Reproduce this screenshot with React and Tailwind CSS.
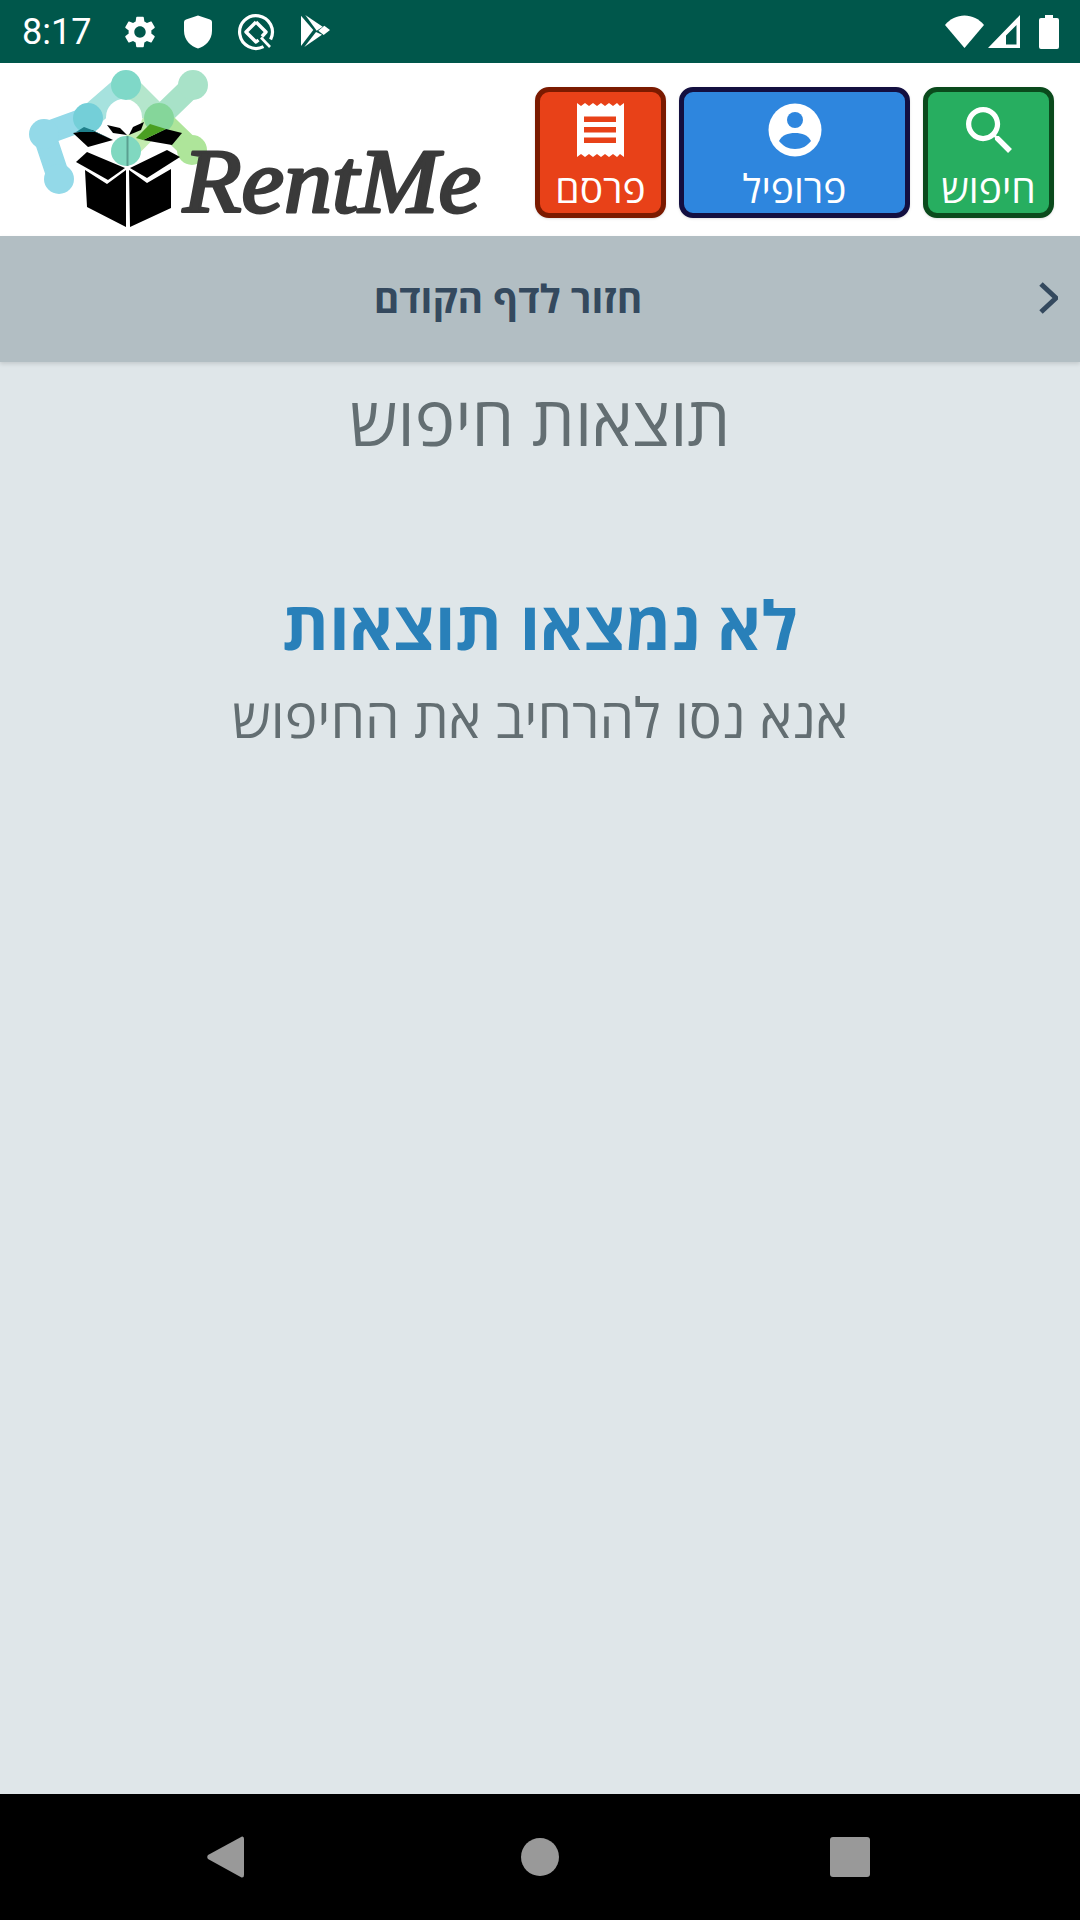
const F = '"Open Sans","Noto Sans","DejaVu Sans",sans-serif';

function Gear() {
  return (
    <svg viewBox="0 0 24 24" className="w-[38px] h-[38px]" fill="#fff">
      <path d="M19.14 12.94c.04-.3.06-.61.06-.94 0-.32-.02-.64-.07-.94l2.03-1.58c.18-.14.23-.41.12-.61l-1.92-3.32c-.12-.22-.37-.29-.59-.22l-2.39.96c-.5-.38-1.03-.7-1.62-.94l-.36-2.54c-.04-.24-.24-.41-.48-.41h-3.84c-.24 0-.43.17-.47.41l-.36 2.54c-.59.24-1.13.57-1.62.94l-2.39-.96c-.22-.08-.47 0-.59.22L2.74 8.87c-.12.21-.08.47.12.61l2.03 1.58c-.05.3-.09.63-.09.94s.02.64.07.94l-2.03 1.58c-.18.14-.23.41-.12.61l1.92 3.32c.12.22.37.29.59.22l2.39-.96c.5.38 1.03.7 1.62.94l.36 2.54c.05.24.24.41.48.41h3.84c.24 0 .44-.17.47-.41l.36-2.54c.59-.24 1.13-.56 1.62-.94l2.39.96c.22.08.47 0 .59-.22l1.92-3.32c.12-.22.07-.47-.12-.61l-2.01-1.58zM12 15.6c-1.98 0-3.6-1.62-3.6-3.6s1.62-3.6 3.6-3.6 3.6 1.62 3.6 3.6-1.62 3.6-3.6 3.6z" />
    </svg>
  );
}
function Shield() {
  return (
    <svg viewBox="0 0 28 34" className="w-[28px] h-[34px]" fill="#fff">
      <path d="M14 0.5 L26 4.5 Q28 5.2 28 7 V16 C28 25 21 31.5 14 33.5 C7 31.5 0 25 0 16 V7 Q0 5.2 2 4.5 Z" />
    </svg>
  );
}
function QIcon() {
  return (
    <svg viewBox="0 0 38 38" className="w-[38px] h-[38px]" fill="none" stroke="#fff" strokeWidth="3.2">
      <path d="M26.5 33.6 A16.4 16.4 0 1 1 33.6 26.5" />
      <path d="M19 9 L29 19 L25 23.5 M21.5 27 L19 29 L9 19 L19 9" strokeWidth="3.4" strokeLinejoin="round" />
      <path d="M24 24.5 L33 34" strokeWidth="2.6" />
    </svg>
  );
}
function Play() {
  return (
    <svg viewBox="0 0 30 36" className="w-[30px] h-[36px]" fill="#fff">
      <path d="M1 1.7 L13.3 16 L1 32 Z" />
      <path d="M5.3 1 L22.7 12.7 L16.7 16.7 Z" />
      <path d="M30 16 L24.3 11.7 L18.3 16.7 L23.7 21 Z" />
      <path d="M4.3 33 L22 20.7 L16 18 Z" />
    </svg>
  );
}
function Wifi() {
  return (
    <svg viewBox="0 0 39 33" className="w-[39px] h-[33px]" fill="#fff">
      <path d="M19.5 33 L0 10 C5 4 12 0.5 19.5 0.5 C27 0.5 34 4 39 10 Z" />
    </svg>
  );
}
function Signal() {
  return (
    <svg viewBox="0 0 32 33" className="w-[32px] h-[33px]" fill="#fff">
      <path fillRule="evenodd" d="M32 0 V33 H0 Z M28.5 10 L18 20.5 V29.5 H28.5 Z" />
    </svg>
  );
}
function Battery() {
  return (
    <svg viewBox="0 0 20 34" className="w-[20px] h-[34px]" fill="#fff">
      <path d="M6 0 H14 V3 H18 Q20 3 20 5 V32 Q20 34 18 34 H2 Q0 34 0 32 V5 Q0 3 2 3 H6 Z" />
    </svg>
  );
}
function Search() {
  return (
    <svg viewBox="3 3 17.5 17.5" className="w-[46px] h-[46px]" fill="#fff">
      <path d="M15.5 14h-.79l-.28-.27C15.41 12.59 16 11.11 16 9.5 16 5.91 13.09 3 9.5 3S3 5.91 3 9.5 5.91 16 9.5 16c1.61 0 3.09-.59 4.23-1.57l.27.28v.79l5 4.99L20.49 19l-4.99-5zm-6 0C7.01 14 5 11.99 5 9.5S7.01 5 9.5 5 14 7.01 14 9.5 11.99 14 9.5 14z" />
    </svg>
  );
}
function Profile() {
  return (
    <svg viewBox="0 0 54 54" className="w-[54px] h-[54px]">
      <circle cx="27" cy="27" r="26.5" fill="#fff" />
      <circle cx="27" cy="17" r="8" fill="#2e86de" />
      <path d="M11 38 C14 32 20 30 27 30 C34 30 40 32 43 38 C39 43 34 46 27 46 C20 46 15 43 11 38 Z" fill="#2e86de" />
    </svg>
  );
}
function Receipt() {
  return (
    <svg viewBox="0 0 47 54" className="w-[47px] h-[54px]">
      <path
        fill="#fff"
        d="M0 0 L4 3 L8 0 L12 3 L16 0 L20 3 L24 0 L28 3 L32 0 L36 3 L40 0 L43 3 L47 0 V54 L43 51 L40 54 L36 51 L32 54 L28 51 L24 54 L20 51 L16 54 L12 51 L8 54 L4 51 L0 54 Z"
      />
      <path fill="#e84118" d="M7 13.5 H39 V19 H7 Z M7 24 H39 V29.5 H7 Z M7 34.5 H39 V40 H7 Z" />
    </svg>
  );
}
function Logo() {
  return (
    <svg viewBox="0 0 500 173" className="w-[500px] h-[173px]">
      <g transform="translate(0,-63)">
        <g fill="none" strokeLinecap="round">
          <path d="M44 134 L88 118" stroke="#93d9e8" strokeWidth="23" />
          <path d="M44 134 L59 179" stroke="#93d9e8" strokeWidth="23" />
          <path d="M88 118 L126 85" stroke="#a6e2de" strokeWidth="24" />
          <path d="M126 85 L159 118" stroke="#b4e6cc" strokeWidth="24" />
          <path d="M159 118 L193 85" stroke="#a8e2c8" strokeWidth="22" />
          <path d="M159 118 L192 150" stroke="#aee59a" strokeWidth="22" />
          <path d="M126 151 L159 118" stroke="#c4ecb0" strokeWidth="22" />
        </g>
        <circle cx="124" cy="117" r="18" fill="#fff" />
        <circle cx="44" cy="134" r="15" fill="#93d9e8" />
        <circle cx="59" cy="179" r="15" fill="#93d9e8" />
        <circle cx="88" cy="118" r="15" fill="#74cfd8" />
        <circle cx="126" cy="85" r="15" fill="#7fd8c8" />
        <circle cx="193" cy="85" r="15" fill="#a8e2c8" />
        <circle cx="159" cy="118" r="15" fill="#85d69a" />
        <circle cx="192" cy="150" r="15" fill="#aee59a" />
        <g fill="#000">
          <path d="M85 170 L107 184 L126 170 V227 L87 207 Z" />
          <path d="M129 170 L147 183 L171 169 L171 208 L130 227 Z" />
          <path d="M76 162 L87 152 L125 168 L108 180 Z" />
          <path d="M130 168 L167 150 L180 157 L147 178 Z" />
          <path d="M73 133 L92 130 L113 140 L88 147 Z" />
          <path d="M143 140 L166 129 L182 133 L172 145 Z" />
          <path d="M107 125 L120 128 L127 135 L113 133 Z" />
          <path d="M144 122 L141 130 L129 135 L133 127 Z" />
        </g>
        <path d="M113 140 L92 130 L84 127 L76 132 L95 132 Z" fill="#1f7f8a" />
        <path d="M143 140 L166 129 L150 124 L136 138 Z" fill="#4a9f22" />
        <circle cx="126" cy="151" r="15" fill="#80d8c0" />
        <rect x="126.5" y="136" width="2" height="30" fill="#5a9f90" />
        <text x="183" y="212" fill="#3a3a3a" stroke="#3a3a3a" strokeWidth="3" strokeLinejoin="round" fontFamily='"Liberation Serif",serif' fontStyle="italic" fontSize="92" textLength="298" lengthAdjust="spacingAndGlyphs">RentMe</text>
      </g>
    </svg>
  );
}

function NavButton({ bg, border, width, icon, label }) {
  return (
    <div className={`flex flex-col items-center rounded-[14px] border-[5px] shadow-sm ${bg} ${border} ${width}`}>
      <div className="h-[76px] flex items-center justify-center">{icon}</div>
      <span className="text-[39px] leading-[40px] text-white">{label}</span>
    </div>
  );
}

export default function App() {
  return (
    <div className="w-[1080px] h-[1920px] flex flex-col bg-[#dfe6e9] overflow-hidden" style={{ fontFamily: F }}>
      <div className="h-[63px] bg-[#00574b] flex items-center justify-between pl-[22px] pr-[21px] shrink-0">
        <div className="flex items-center">
          <span className="text-[36px] text-white leading-none w-[99px]" style={{ fontFamily: 'Roboto,sans-serif' }}>8:17</span>
          <div className="flex items-center gap-[25px]">
            <Gear />
            <Shield />
            <QIcon />
            <Play />
          </div>
        </div>
        <div className="flex items-center">
          <Wifi />
          <div className="ml-[4px]"><Signal /></div>
          <div className="ml-[19px]"><Battery /></div>
        </div>
      </div>

      <div dir="rtl" className="h-[173px] bg-white flex items-center shrink-0 pr-[26px] relative">
        <div className="flex gap-[13px] h-[131px] mt-[6px]">
          <NavButton bg="bg-[#27ae60]" border="border-[#0a4a1c]" width="w-[131px]" icon={<Search />} label="חיפוש" />
          <NavButton bg="bg-[#2e86de]" border="border-[#130f40]" width="w-[231px]" icon={<Profile />} label="פרופיל" />
          <NavButton bg="bg-[#e84118]" border="border-[#7b1a00]" width="w-[131px]" icon={<Receipt />} label="פרסם" />
        </div>
        <div className="absolute left-0 top-0" dir="ltr"><Logo /></div>
      </div>

      <div className="h-[126px] bg-[#b2bec3] shadow-[0_2px_4px_rgba(0,0,0,0.12)] flex items-center relative shrink-0">
        <div dir="rtl" className="w-[1036px] pr-[20px] text-center text-[39px] font-bold text-[#34495e] -mt-[1px]">חזור לדף הקודם</div>
        <svg viewBox="0 0 20 32" className="w-[20px] h-[32px] ml-[2px] -mt-[2px]" fill="none" stroke="#34495e" strokeWidth="5">
          <path d="M3 2 L18 16 L3 30" />
        </svg>
      </div>

      <div dir="rtl" className="flex-1 flex flex-col items-center text-center">
        <h1 className="text-[68px] leading-[80px] text-[#636e72] mt-[18px]">תוצאות חיפוש</h1>
        <h2 className="text-[67px] leading-[90px] font-bold text-[#2980b9] mt-[119px]">לא נמצאו תוצאות</h2>
        <p className="text-[55px] leading-[70px] text-[#636e72] mt-[13px]">אנא נסו להרחיב את החיפוש</p>
      </div>

      <div className="h-[126px] bg-black flex items-center justify-between shrink-0 pl-[207px] pr-[210px]">
        <svg viewBox="0 0 37 42" className="w-[37px] h-[42px]" fill="#999">
          <path d="M35 0.5 Q37 0 37 3 V39 Q37 42 34.5 41.5 L1 23 Q-0.5 21 1 19 Z" />
        </svg>
        <div className="w-[38px] h-[38px] rounded-full bg-[#999] ml-[6px]" />
        <div className="w-[40px] h-[40px] rounded-[3px] bg-[#999]" />
      </div>
    </div>
  );
}
